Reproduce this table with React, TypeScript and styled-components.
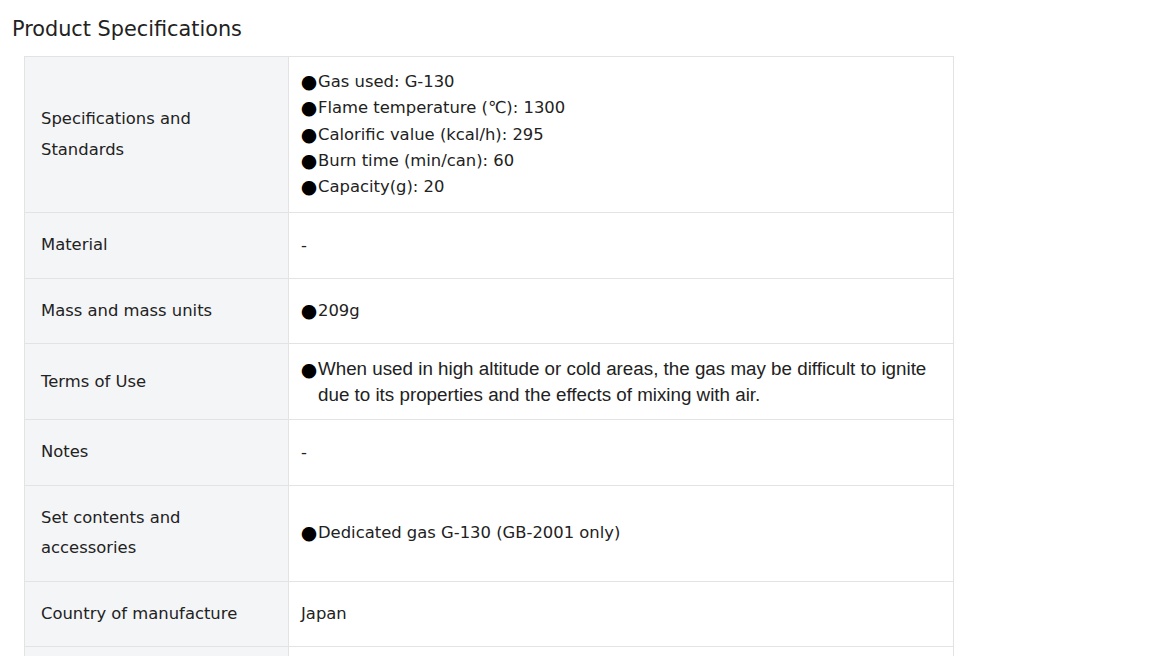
import React from "react";
import styled, { createGlobalStyle } from "styled-components";

const GlobalStyle = createGlobalStyle`
  html, body {
    margin: 0;
    padding: 0;
    background: #ffffff;
  }
  body {
    font-family: "DejaVu Sans", "Noto Sans CJK JP", sans-serif;
    color: #222222;
  }
`;

const Page = styled.div`
  padding: 14px 12px 0 12px;
`;

const Title = styled.h2`
  margin: 0 0 12px 0;
  font-size: 20.8px;
  font-weight: 400;
  line-height: 30px;
  color: #222222;
`;

const SpecTable = styled.div`
  display: grid;
  grid-template-columns: 264px 665px;
  margin-left: 12px;
  border-top: 1px solid #e3e3e3;
  border-left: 1px solid #e3e3e3;
  width: max-content;
`;

const Label = styled.div`
  background: #f4f5f7;
  padding: 17px 16px;
  min-height: 30px;
  font-size: 16.4px;
  line-height: 30.5px;
  border-right: 1px solid #e3e3e3;
  border-bottom: 1px solid #e3e3e3;
  display: flex;
  align-items: center;
`;

const Value = styled.div`
  padding: 12px 12px;
  font-size: 16.4px;
  line-height: 26.3px;
  border-right: 1px solid #e3e3e3;
  border-bottom: 1px solid #e3e3e3;
  display: flex;
  flex-direction: column;
  justify-content: center;
`;

const Item = styled.div<{ $narrow?: boolean }>`
  padding-left: 17px;
  text-indent: -17px;
  ${(p) =>
    p.$narrow &&
    `
    font-family: "Liberation Sans Narrow", "Liberation Sans", sans-serif;
    font-size: 18.8px;
    line-height: 25.5px;
  `}
`;

const Bullet = styled.span`
  display: inline-block;
  width: 17px;
  height: 16px;
  line-height: 16px;
  vertical-align: -2px;
  text-indent: 0;
  font-family: "Noto Sans CJK JP", sans-serif;
  font-size: 16px;
  color: #000;
`;

type Row = { label: string; items?: string[]; plain?: string; narrow?: boolean };

const rows: Row[] = [
  {
    label: "Specifications and Standards",
    items: [
      "Gas used: G-130",
      "Flame temperature (℃): 1300",
      "Calorific value (kcal/h): 295",
      "Burn time (min/can): 60",
      "Capacity(g): 20",
    ],
  },
  { label: "Material", plain: "-" },
  { label: "Mass and mass units", items: ["209g"] },
  {
    label: "Terms of Use",
    narrow: true,
    items: [
      "When used in high altitude or cold areas, the gas may be difficult to ignite due to its properties and the effects of mixing with air.",
    ],
  },
  { label: "Notes", plain: "-" },
  { label: "Set contents and accessories", items: ["Dedicated gas G-130 (GB-2001 only)"] },
  { label: "Country of manufacture", plain: "Japan" },
  { label: "", plain: "" },
];

export default function App() {
  return (
    <>
      <GlobalStyle />
      <Page>
        <Title>Product Specifications</Title>
        <SpecTable>
          {rows.map((row, i) => (
            <React.Fragment key={i}>
              <Label>{row.label}</Label>
              <Value>
                {row.plain && <div>{row.plain}</div>}
                {row.items &&
                  row.items.map((item) => (
                    <Item key={item} $narrow={row.narrow}>
                      <Bullet>●</Bullet>
                      {item}
                    </Item>
                  ))}
              </Value>
            </React.Fragment>
          ))}
        </SpecTable>
      </Page>
    </>
  );
}
